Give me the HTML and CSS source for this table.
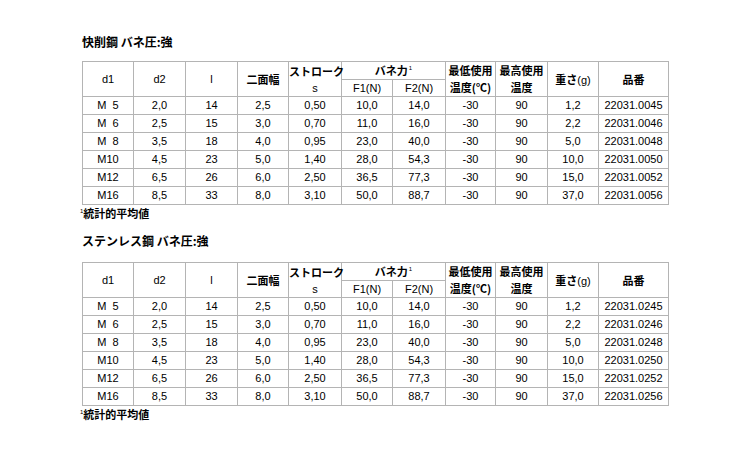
FILE: index.html
```html
<!DOCTYPE html>
<html lang="ja">
<head>
<meta charset="utf-8">
<link rel="stylesheet" href="styles.css">
</head>
<body>
<div class="page">
  <section class="block first">
    <h2 class="title">快削鋼 バネ圧:強</h2>
    <table class="spec">
      <colgroup>
        <col class="c51"><col class="c52"><col class="c52"><col class="c51"><col class="c53"><col class="c51"><col class="c53"><col class="c50"><col class="c52"><col class="c51"><col class="c70">
      </colgroup>
      <thead>
        <tr class="h1">
          <th rowspan="2">d1</th>
          <th rowspan="2">d2</th>
          <th rowspan="2">l</th>
          <th rowspan="2"><span class="j">二面幅</span></th>
          <th rowspan="2" class="two"><span class="j">ストローク</span><br>s</th>
          <th colspan="2" class="under"><span class="j">バネ力</span><sup>1</sup></th>
          <th rowspan="2" class="two"><span class="j">最低使用</span><br><span class="j">温度(℃)</span></th>
          <th rowspan="2" class="two"><span class="j">最高使用</span><br><span class="j">温度</span></th>
          <th rowspan="2"><span class="j">重さ</span>(g)</th>
          <th rowspan="2"><span class="j">品番</span></th>
        </tr>
        <tr class="h2">
          <th>F1(N)</th>
          <th>F2(N)</th>
        </tr>
      </thead>
      <tbody>
        <tr><td>M&nbsp;&nbsp;5</td><td>2,0</td><td>14</td><td>2,5</td><td>0,50</td><td>10,0</td><td>14,0</td><td>-30</td><td>90</td><td>1,2</td><td>22031.0045</td></tr>
        <tr><td>M&nbsp;&nbsp;6</td><td>2,5</td><td>15</td><td>3,0</td><td>0,70</td><td>11,0</td><td>16,0</td><td>-30</td><td>90</td><td>2,2</td><td>22031.0046</td></tr>
        <tr><td>M&nbsp;&nbsp;8</td><td>3,5</td><td>18</td><td>4,0</td><td>0,95</td><td>23,0</td><td>40,0</td><td>-30</td><td>90</td><td>5,0</td><td>22031.0048</td></tr>
        <tr><td>M10</td><td>4,5</td><td>23</td><td>5,0</td><td>1,40</td><td>28,0</td><td>54,3</td><td>-30</td><td>90</td><td>10,0</td><td>22031.0050</td></tr>
        <tr><td>M12</td><td>6,5</td><td>26</td><td>6,0</td><td>2,50</td><td>36,5</td><td>77,3</td><td>-30</td><td>90</td><td>15,0</td><td>22031.0052</td></tr>
        <tr><td>M16</td><td>8,5</td><td>33</td><td>8,0</td><td>3,10</td><td>50,0</td><td>88,7</td><td>-30</td><td>90</td><td>37,0</td><td>22031.0056</td></tr>
      </tbody>
    </table>
    <p class="note"><sup>1</sup><span class="j">統計的平均値</span></p>
  </section>

  <section class="block second">
    <h2 class="title">ステンレス鋼 バネ圧:強</h2>
    <table class="spec">
      <colgroup>
        <col class="c51"><col class="c52"><col class="c52"><col class="c51"><col class="c53"><col class="c51"><col class="c53"><col class="c50"><col class="c52"><col class="c51"><col class="c70">
      </colgroup>
      <thead>
        <tr class="h1">
          <th rowspan="2">d1</th>
          <th rowspan="2">d2</th>
          <th rowspan="2">l</th>
          <th rowspan="2"><span class="j">二面幅</span></th>
          <th rowspan="2" class="two"><span class="j">ストローク</span><br>s</th>
          <th colspan="2" class="under"><span class="j">バネ力</span><sup>1</sup></th>
          <th rowspan="2" class="two"><span class="j">最低使用</span><br><span class="j">温度(℃)</span></th>
          <th rowspan="2" class="two"><span class="j">最高使用</span><br><span class="j">温度</span></th>
          <th rowspan="2"><span class="j">重さ</span>(g)</th>
          <th rowspan="2"><span class="j">品番</span></th>
        </tr>
        <tr class="h2">
          <th>F1(N)</th>
          <th>F2(N)</th>
        </tr>
      </thead>
      <tbody>
        <tr><td>M&nbsp;&nbsp;5</td><td>2,0</td><td>14</td><td>2,5</td><td>0,50</td><td>10,0</td><td>14,0</td><td>-30</td><td>90</td><td>1,2</td><td>22031.0245</td></tr>
        <tr><td>M&nbsp;&nbsp;6</td><td>2,5</td><td>15</td><td>3,0</td><td>0,70</td><td>11,0</td><td>16,0</td><td>-30</td><td>90</td><td>2,2</td><td>22031.0246</td></tr>
        <tr><td>M&nbsp;&nbsp;8</td><td>3,5</td><td>18</td><td>4,0</td><td>0,95</td><td>23,0</td><td>40,0</td><td>-30</td><td>90</td><td>5,0</td><td>22031.0248</td></tr>
        <tr><td>M10</td><td>4,5</td><td>23</td><td>5,0</td><td>1,40</td><td>28,0</td><td>54,3</td><td>-30</td><td>90</td><td>10,0</td><td>22031.0250</td></tr>
        <tr><td>M12</td><td>6,5</td><td>26</td><td>6,0</td><td>2,50</td><td>36,5</td><td>77,3</td><td>-30</td><td>90</td><td>15,0</td><td>22031.0252</td></tr>
        <tr><td>M16</td><td>8,5</td><td>33</td><td>8,0</td><td>3,10</td><td>50,0</td><td>88,7</td><td>-30</td><td>90</td><td>37,0</td><td>22031.0256</td></tr>
      </tbody>
    </table>
    <p class="note"><sup>1</sup><span class="j">統計的平均値</span></p>
  </section>
</div>
</body>
</html>
```

FILE: styles.css
```css
html, body {
  margin: 0;
  padding: 0;
  background: #ffffff;
}

body {
  font-family: "Liberation Sans", Arial, "Noto Sans CJK JP", sans-serif;
  color: #000000;
  font-size: 11px;
}

.page {
  padding: 34px 0 0 82px;
}

.j {
  font-family: "Noto Sans CJK JP", sans-serif;
  font-weight: 700;
}

.title {
  margin: 0 0 11px 0;
  font-size: 12px;
  line-height: 16px;
  font-family: "Noto Sans CJK JP", sans-serif;
  font-weight: 700;
  color: #000000;
}

.second .title {
  margin-top: 12px;
  margin-bottom: 13px;
}

.spec {
  border-collapse: collapse;
  table-layout: fixed;
  width: 586px;
  border: 1px solid #333333;
}

.c50 { width: 50px; }
.c51 { width: 51px; }
.c52 { width: 52px; }
.c53 { width: 53px; }
.c70 { width: 70px; }

.spec th,
.spec td {
  border: 1px solid #b4b4b4;
  padding: 0;
  text-align: center;
  vertical-align: middle;
  font-weight: 400;
  font-size: 11px;
  white-space: nowrap;
}

.spec th {
  line-height: 16px;
}

.spec tr.h1 { height: 15px; }
.spec tr.h2 { height: 16px; }

.spec td {
  height: 17px;
  line-height: 17px;
}

.spec sup,
.note sup {
  font-size: 6px;
  line-height: 0;
  vertical-align: 5px;
  margin-left: 1px;
}

.note {
  margin: 1px 0 0 -2px;
  line-height: 14px;
  font-size: 11px;
}

.note sup {
  margin-left: 0;
  margin-right: 0;
  font-family: "Liberation Sans", sans-serif;
}
```
